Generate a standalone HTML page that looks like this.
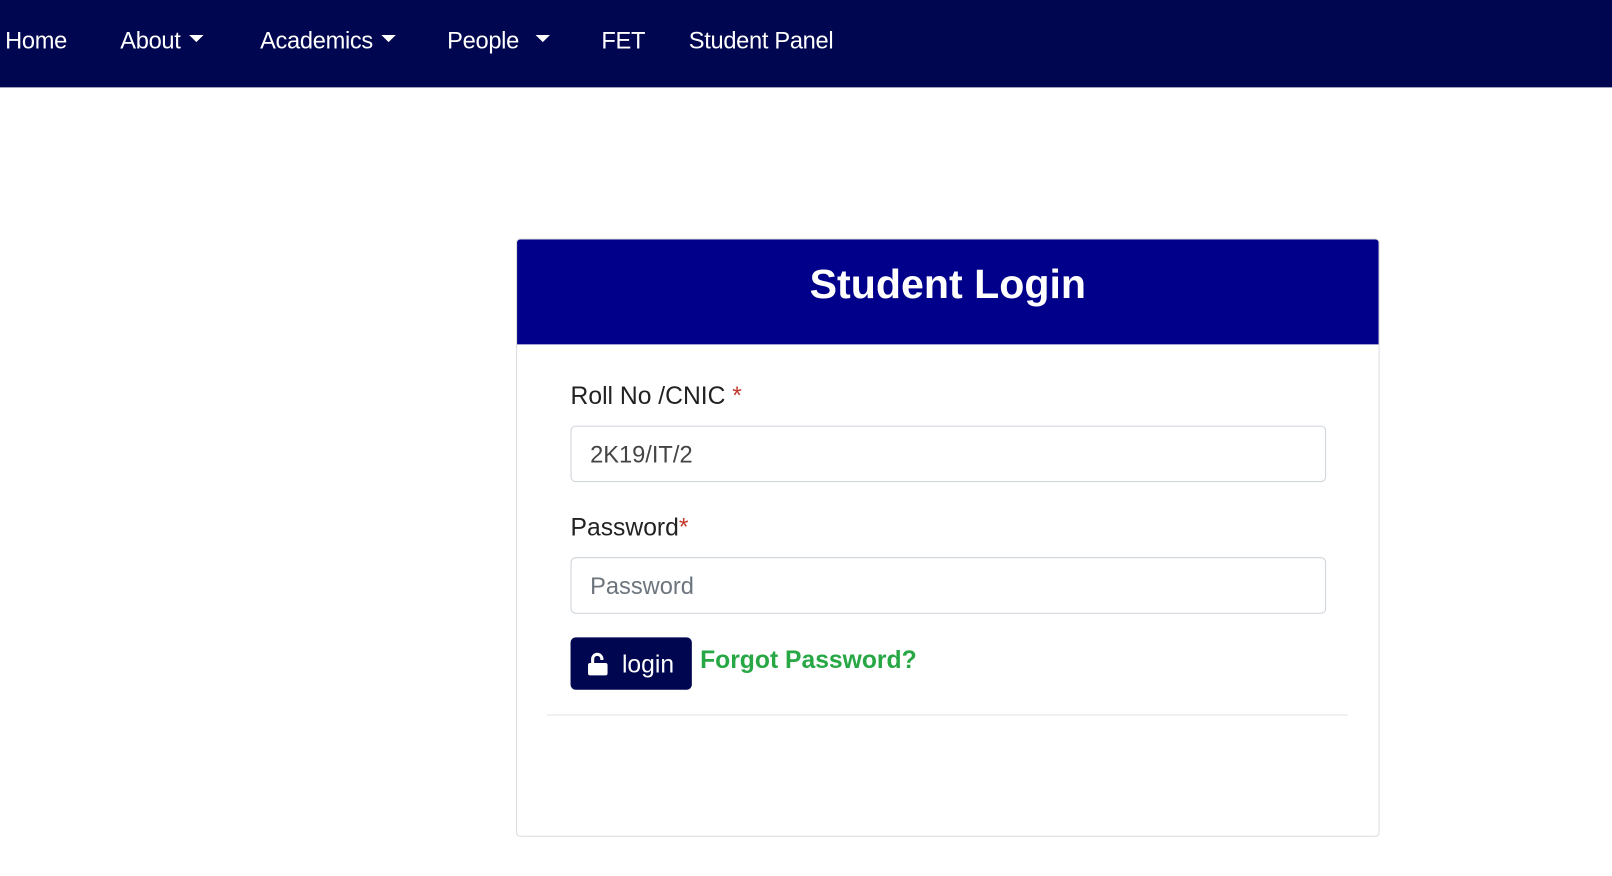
<!DOCTYPE html>
<html><head><style>
body{margin:0;width:1612px;height:876px;background:#fff;font-family:"Liberation Sans",sans-serif;position:relative;overflow:hidden}
#w{position:absolute;left:0;top:0;width:1568px;height:852px;transform:scale(1.028);transform-origin:0 0}
.nav{position:absolute;left:0;top:0;width:1600px;height:85px;background:#00064f}
.nav span{position:absolute;top:26px;color:#fff;font-size:23px;letter-spacing:-0.3px}
.car{display:inline-block;border-left:7px solid transparent;border-right:7px solid transparent;border-top:7px solid #fff;vertical-align:middle;margin-left:8px;margin-top:-6px}
.card{position:absolute;left:502px;top:232px;width:840px;height:582px;border:1px solid #dcdcdc;border-radius:4px;box-sizing:border-box}
.head{position:absolute;left:503px;top:233px;width:838px;height:102px;background:#00008b;border-radius:3px 3px 0 0;color:#fff;font-size:40px;font-weight:bold;text-align:center;line-height:88px}
.lbl{position:absolute;left:555px;font-size:24px;color:#222}
.lbl b{color:#c0392b;font-weight:normal}
.inp{position:absolute;left:555px;width:735px;height:55px;border:1px solid #ced4da;border-radius:5px;box-sizing:border-box;font-size:23px;padding-left:18px;line-height:55px}
.btn{position:absolute;left:555px;top:620px;width:118px;height:51px;background:#00064f;border-radius:5px;color:#fff;font-size:24px;line-height:53px}
.fp{position:absolute;left:681px;top:629px;color:#28a745;font-weight:bold;font-size:24px}
.hr{position:absolute;left:532px;top:695px;width:779px;height:1px;background:#e3e3e3}
</style></head><body><div id="w">
<div class="nav">
<span style="left:5px">Home</span>
<span style="left:117px">About<i class="car"></i></span>
<span style="left:253px">Academics<i class="car"></i></span>
<span style="left:435px">People<i class="car" style="margin-left:16px"></i></span>
<span style="left:585px">FET</span>
<span style="left:670px">Student Panel</span>
</div>
<div class="card"></div>
<div class="head">Student Login</div>
<div class="lbl" style="top:372px">Roll No /CNIC <b>*</b></div>
<div class="inp" style="top:414px;color:#444">2K19/IT/2</div>
<div class="lbl" style="top:500px">Password<b>*</b></div>
<div class="inp" style="top:542px;color:#6c757d">Password</div>
<div class="btn"><svg style="position:absolute;left:16px;top:14px" width="22" height="24" viewBox="0 0 22 24"><path d="M4 11V7a6 6 0 0 1 12 0v1h-3V7a3 3 0 0 0-6 0v4z" fill="#fff"/><rect x="1" y="11" width="19" height="12" rx="2" fill="#fff"/></svg><span style="position:absolute;left:50px">login</span></div>
<div class="fp">Forgot Password?</div>
<div class="hr"></div>
</div></body></html>
